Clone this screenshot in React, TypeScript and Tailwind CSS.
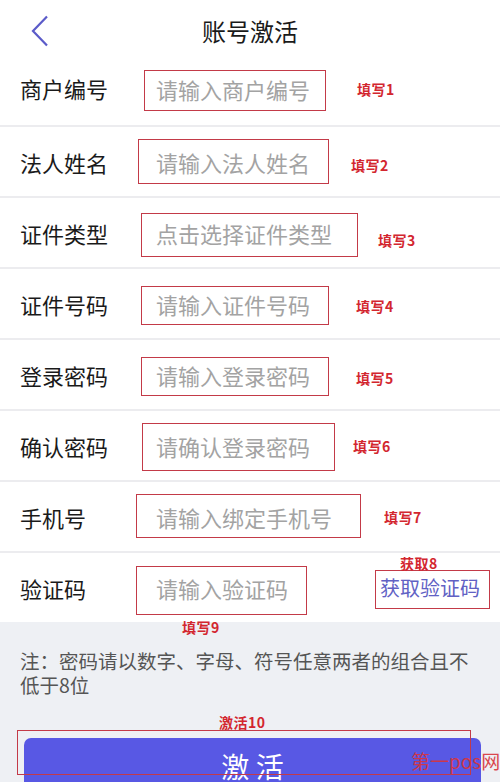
import React from "react";

const F = { fontFamily: '"Noto Sans CJK SC", "Noto Sans", sans-serif' };

type Row = {
  label: string;
  ph: string;
  box: [number, number, number, number]; // left, top, width, height
  note: string;
  nx: number;
  ny: number;
};

const rows: Row[] = [
  { label: "商户编号", ph: "请输入商户编号", box: [144, 14, 182, 41], note: "填写1", nx: 357, ny: 26 },
  { label: "法人姓名", ph: "请输入法人姓名", box: [138, 12, 191, 45], note: "填写2", nx: 351, ny: 31 },
  { label: "证件类型", ph: "点击选择证件类型", box: [141, 15, 217, 44], note: "填写3", nx: 378, ny: 35 },
  { label: "证件号码", ph: "请输入证件号码", box: [141, 17, 188, 39], note: "填写4", nx: 356, ny: 30 },
  { label: "登录密码", ph: "请输入登录密码", box: [141, 17, 188, 39], note: "填写5", nx: 356, ny: 31 },
  { label: "确认密码", ph: "请确认登录密码", box: [142, 12, 193, 48], note: "填写6", nx: 353, ny: 28 },
  { label: "手机号", ph: "请输入绑定手机号", box: [136, 12, 225, 44], note: "填写7", nx: 384, ny: 28 },
];

function Note({ text, x, y }: { text: string; x: number; y: number }) {
  return (
    <span
      className="absolute whitespace-nowrap text-[14px] font-bold leading-[14px] text-[#d3262f] tracking-[0.5px]"
      style={{ left: x, top: y }}
    >
      {text}
    </span>
  );
}

function Box({ b }: { b: [number, number, number, number] }) {
  return (
    <div
      className="absolute border-[1.5px] border-[#c33a48]"
      style={{ left: b[0], top: b[1], width: b[2], height: b[3] }}
    />
  );
}

export default function App() {
  return (
    <div className="relative w-[500px] h-[782px] overflow-hidden bg-[#eef0f4]" style={F}>
      {/* header */}
      <div className="relative h-[56px] bg-white flex items-center justify-center">
        <svg className="absolute left-[30px] top-[15px]" width="20" height="32" viewBox="0 0 20 32">
          <path d="M17 1.5 L3 16 L17 30.5" fill="none" stroke="#5b5bc9" strokeWidth="2.2" />
        </svg>
        <span className="text-[24px] text-[#1a1a1a] leading-none mt-[6px]">账号激活</span>
      </div>

      {rows.map((r, i) => (
        <div
          key={r.label}
          className={
            "relative h-[69px] bg-white flex items-center border-b-2 border-[#ececef] box-content " +
            (i === 0 ? "pb-[0px]" : "")
          }
        >
          <span className={"w-[156px] pl-[20px] text-[22px] text-[#1a1a1a] leading-none " + (i === 0 ? "-mt-[5px]" : "")}>
            {r.label}
          </span>
          <span className={"text-[22px] text-[#a3a3a3] leading-none " + (i === 0 ? "-mt-[3px]" : "")}>{r.ph}</span>
          <Box b={r.box} />
          <Note text={r.note} x={r.nx} y={r.ny} />
        </div>
      ))}

      {/* verification row */}
      <div className="relative h-[69px] bg-white flex items-center">
        <span className="w-[156px] pl-[20px] text-[22px] text-[#1a1a1a] leading-none">验证码</span>
        <span className="text-[22px] text-[#a3a3a3] leading-none">请输入验证码</span>
        <span className="ml-auto mr-[20px] text-[20px] text-[#6161c4] leading-none">获取验证码</span>
        <Box b={[136, 13, 171, 49]} />
        <Box b={[375, 17, 115, 39]} />
        <Note text="获取8" x={400} y={3} />
        <Note text="填写9" x={182} y={67} />
      </div>

      {/* bottom area */}
      <div className="relative px-[20px] pt-[27px]">
        <p className="text-[19.5px] leading-[24px] text-[#555]">
          注：密码请以数字、字母、符号任意两者的组合且不低于8位
        </p>
        <div className="mt-[41px] ml-[4px] w-[457px] h-[60px] rounded-t-[7px] bg-[#5858e4] flex justify-center pt-[14px]">
          <span className="text-[28px] text-white leading-none whitespace-pre">激 活</span>
        </div>
        <div className="absolute left-[17px] top-[108px] w-[454px] h-[45px] border-[1.5px] border-[#c33a48]" />
        <Note text="激活10" x={219} y={93} />
        <span className="absolute left-[411px] top-[129px] whitespace-nowrap text-[19px] leading-none text-[#d8343c] opacity-90">
          第一pos网
        </span>
      </div>
    </div>
  );
}
